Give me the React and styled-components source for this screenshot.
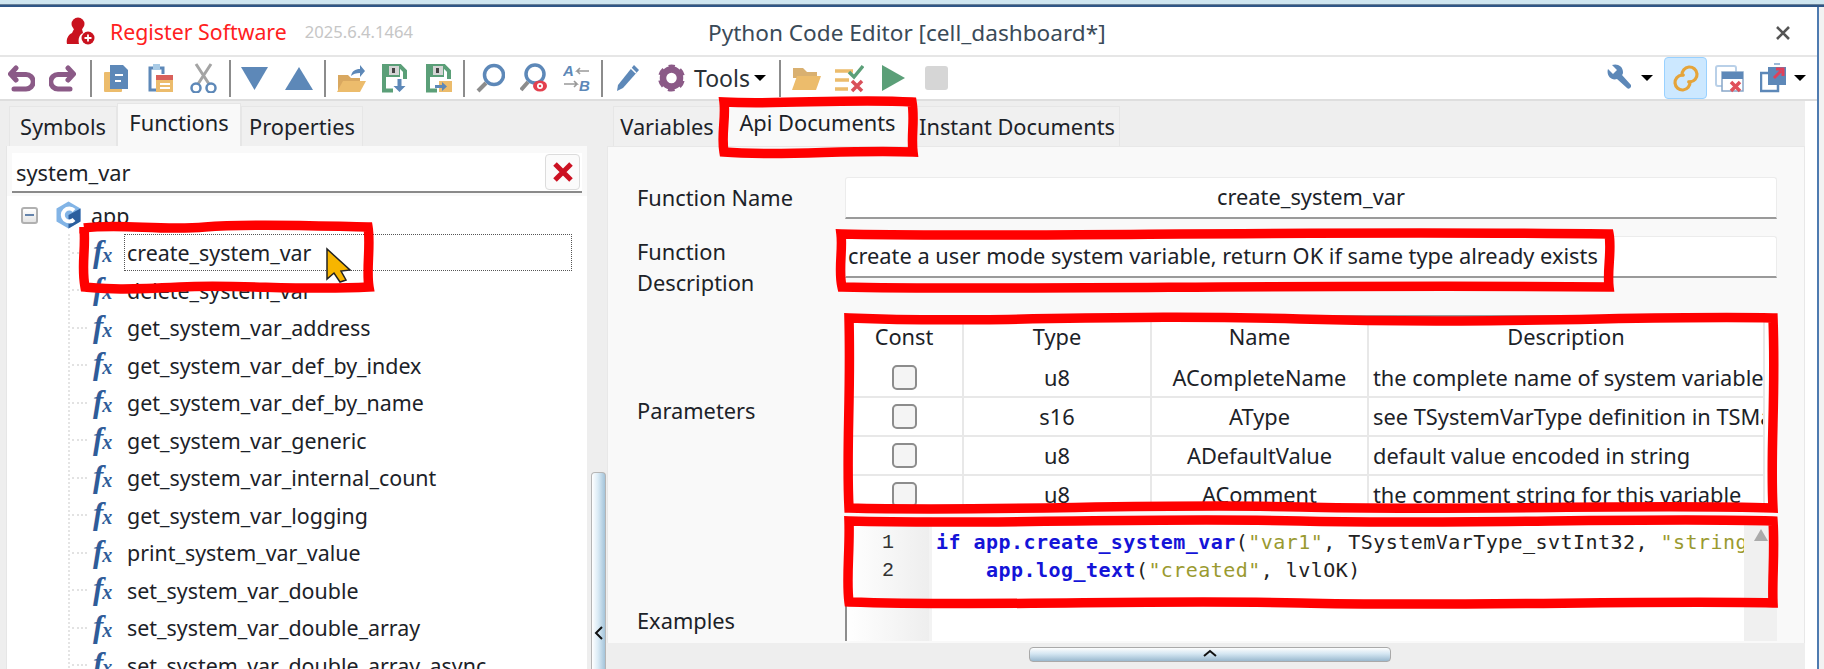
import React from "react";
import styled, { createGlobalStyle } from "styled-components";

const Global = createGlobalStyle`
  html, body { margin: 0; padding: 0; background: #fff; overflow: hidden; }
  * { box-sizing: border-box; }
  body { font-family: "Noto Sans", "Open Sans", sans-serif; color: #1c2228; }
`;

const Page = styled.div`
  position: relative;
  width: 1824px;
  height: 669px;
  overflow: hidden;
  background: #f2f2f2;
`;
const TopStrip = styled.div`
  height: 7px;
  background: linear-gradient(#cfe6f0 0 4px, #6a8299 4px 5px, #2f5686 5px);
`;
const Shell = styled.div`
  width: 1819px;
  height: 662px;
  background: #fff;
  border-right: 2px solid #4f7bb0;
  display: flex;
  flex-direction: column;
`;
const TitleBar = styled.header`
  height: 50px;
  flex: none;
  display: flex;
  align-items: center;
  padding-left: 66px;
  position: relative;
  border-bottom: 2px solid #e6e6e6;
`;
const RegisterText = styled.span`
  margin-left: 15px;
  color: #ff2020;
  font-size: 21.3px;
`;
const VersionText = styled.span`
  margin-left: 18px;
  margin-top: 0;
  color: #c6c6c6;
  font-size: 16.6px;
`;
const WindowTitle = styled.span`
  position: absolute;
  left: 708px;
  top: 9px;
  font-size: 22.6px;
  line-height: 34px;
  color: #3a4a58;
  white-space: nowrap;
`;
const CloseGlyph = styled.svg`
  position: absolute;
  right: 26px;
  top: 18px;
`;
const Toolbar = styled.div`
  height: 44px;
  flex: none;
  display: flex;
  align-items: center;
  padding-left: 8px;
  border-bottom: 2px solid #dedede;
`;
const Tool = styled.div`
  flex: none;
  margin-left: ${(p) => p.$ml || 0}px;
  display: flex;
  align-items: center;
  justify-content: center;
`;
const Sep = styled.div`
  flex: none;
  width: 2px;
  height: 37px;
  background: #8c8c8c;
  margin-left: ${(p) => p.$ml}px;
`;
const ToolsLabel = styled.span`
  margin-left: ${(p) => p.$ml}px;
  font-size: 23px;
  color: #2a2f35;
`;
const Caret = styled.span`
  flex: none;
  margin-left: ${(p) => p.$ml}px;
  width: 0;
  height: 0;
  border-left: 6px solid transparent;
  border-right: 6px solid transparent;
  border-top: 6px solid #000;
`;
const Spacer = styled.div`
  flex: 1;
`;
const ActiveTool = styled.div`
  flex: none;
  width: 43px;
  height: 42px;
  margin-left: 11px;
  border: 1px solid #99d1ff;
  border-radius: 4px;
  background: #cce8ff;
  display: flex;
  align-items: center;
  justify-content: center;
`;
const Main = styled.main`
  flex: 1;
  min-height: 0;
  display: flex;
  background: #eeeeee;
  padding-right: 12px;
  background-clip: content-box;
`;
const LeftColumn = styled.section`
  width: 587px;
  flex: none;
  padding-left: 6px;
  display: flex;
  flex-direction: column;
`;
const Tabs = styled.div`
  height: 45px;
  flex: none;
  display: flex;
  align-items: flex-end;
  padding-left: ${(p) => p.$pl}px;
`;
const Tab = styled.div`
  width: ${(p) => p.$w}px;
  height: ${(p) => (p.$active ? 43 : 40)}px;
  flex: none;
  display: flex;
  justify-content: center;
  align-items: center;
  font-size: 21.8px;
  white-space: nowrap;
  padding-bottom: ${(p) => (p.$active ? 5 : 0)}px;
  background: ${(p) => (p.$active ? "#f9f9f9" : "#f0f0f0")};
  border: 1px solid #e6e6e6;
  border-bottom: none;
`;
const LeftPanel = styled.div`
  flex: 1;
  min-height: 0;
  background: #f9f9f9;
  border-left: 1px solid #e6e6e6;
  display: flex;
  flex-direction: column;
`;
const SearchBar = styled.div`
  margin: 7px 5px 3px 5px;
  height: 40px;
  flex: none;
  background: #fff;
  border-bottom: 2px solid #8a8a8a;
  display: flex;
  align-items: center;
  justify-content: space-between;
  padding: 0 2px 0 4px;
  font-size: 21.8px;
`;
const ClearButton = styled.div`
  width: 35px;
  height: 36px;
  border: 1px solid #dcdcdc;
  border-radius: 4px;
  background: #fbfbfb;
  display: flex;
  align-items: center;
  justify-content: center;
`;
const Tree = styled.div`
  flex: 1;
  min-height: 0;
  background: #fff;
  overflow: hidden;
  position: relative;
`;
const RootRow = styled.div`
  height: 38px;
  display: flex;
  align-items: center;
  padding-left: 14px;
  font-size: 21.4px;
`;
const Expander = styled.div`
  width: 17px;
  height: 17px;
  border: 2px solid #b0b0b0;
  border-radius: 3px;
  background: linear-gradient(#fff, #e4e4e4);
  display: flex;
  align-items: center;
  justify-content: center;
  &::after {
    content: "";
    width: 9px;
    height: 2px;
    background: #6584ac;
  }
`;
const RootIcon = styled.svg`
  margin-left: 17px;
`;
const RootLabel = styled.span`
  margin-left: 9px;
`;
const Children = styled.div`
  margin-left: 61px;
  border-left: 2px dotted #e4e4e4;
`;
const Row = styled.div`
  height: 37.5px;
  display: flex;
  align-items: center;
  padding-left: 2px;
  margin-right: 15px;
  &::before {
    content: "";
    width: 15px;
    margin-right: 6px;
    flex: none;
    border-top: 2px dotted #e2e2e2;
  }
`;
const FxIcon = styled.span`
  flex: none;
  width: 31px;
  height: 32px;
  font-family: "Liberation Serif", serif;
  font-style: italic;
  font-weight: bold;
  color: #2f5c99;
  font-size: 31px;
  line-height: 30px;
  white-space: nowrap;
  letter-spacing: -1px;
  & > i {
    font-size: 20px;
  }
`;
const RowLabel = styled.div`
  flex: 1;
  height: 37px;
  line-height: 35px;
  padding-left: 2px;
  font-size: 21.4px;
  white-space: nowrap;
  border: 1.5px dotted ${(p) => (p.$focus ? "#555" : "transparent")};
`;
const VSplit = styled.div`
  width: 20px;
  flex: none;
  background: #eeeeee;
  display: flex;
  flex-direction: column;
  justify-content: flex-end;
  align-items: flex-end;
  padding-right: 1px;
`;
const VHandle = styled.div`
  position: relative;
  width: 15px;
  height: 197px;
  border: 1px solid #b5b5b5;
  border-bottom: none;
  border-radius: 4px 4px 0 0;
  background: linear-gradient(90deg, #fff 0%, #dcecf6 45%, #a4c4da 100%);
`;
const VCaret = styled.svg`
  position: absolute;
  left: 2px;
  top: 152px;
`;
const RightColumn = styled.section`
  flex: 1;
  min-width: 0;
  display: flex;
  flex-direction: column;
`;
const DocPanel = styled.div`
  height: 497px;
  flex: none;
  background: #f9f9f9;
  border: 1px solid #e8e8e8;
  border-bottom: none;
  padding: 30px 28px 0 0;
  display: flex;
  flex-direction: column;
`;
const FormRow = styled.div`
  display: grid;
  grid-template-columns: 237px 932px;
  margin-bottom: ${(p) => p.$mb}px;
`;
const Label = styled.div`
  padding-left: 29px;
  padding-bottom: ${(p) => p.$pb ?? 2}px;
  font-size: 21.8px;
  line-height: 31px;
  white-space: pre-line;
  align-self: ${(p) => p.$align || "center"};
`;
const Field = styled.div`
  height: 42px;
  background: #fff;
  border: 1px solid #ececec;
  border-bottom: 2px solid #9a9a9a;
  border-radius: 3px 3px 0 0;
  padding: 0 2px 2px;
  display: flex;
  align-items: center;
  justify-content: ${(p) => (p.$center ? "center" : "flex-start")};
  font-size: 21.8px;
  white-space: nowrap;
  overflow: hidden;
`;
const Table = styled.div`
  height: 193px;
  background: #fff;
  border-top: 2px solid #9a9a9a;
  border-left: 1px solid #ddd;
  overflow: hidden;
  display: grid;
  grid-template-columns: 118px 188px 217px 396px;
  grid-template-rows: 42px repeat(4, 39px);
`;
const Head = styled.div`
  display: flex;
  align-items: center;
  justify-content: center;
  font-size: 21.8px;
  border-right: 2px solid #e8e8e8;
  padding-bottom: 4px;
`;
const Cell = styled.div`
  display: flex;
  align-items: center;
  justify-content: ${(p) => (p.$left ? "flex-start" : "center")};
  padding-left: ${(p) => (p.$left ? 4 : 0)}px;
  font-size: 21.8px;
  border-right: 2px solid #e8e8e8;
  border-bottom: 2px solid #e8e8e8;
  white-space: nowrap;
  overflow: hidden;
`;
const Check = styled.div`
  width: 25px;
  height: 25px;
  border: 2px solid #8c8c8c;
  border-radius: 5px;
  background: #f4f4f4;
`;
const Code = styled.div`
  height: 124px;
  display: grid;
  grid-template-columns: 85px 1fr 33px;
  background: #fff;
  border-left: 2px solid #8e8e8e;
  overflow: hidden;
`;
const Gutter = styled.div`
  background: linear-gradient(90deg, #fff, #eeeeee);
  border-right: 3px solid #f3f3f3;
  padding-top: 12px;
  text-align: center;
  font-family: "Liberation Mono", monospace;
  font-size: 20px;
  line-height: 28px;
  color: #333;
`;
const CodeText = styled.pre`
  margin: 0;
  padding: 11px 0 0 4px;
  font-family: "DejaVu Sans Mono", monospace;
  font-size: 20px;
  letter-spacing: 0.45px;
  line-height: 28px;
  overflow: hidden;
  color: #222;
`;
const Kw = styled.span`
  color: #1414d8;
  font-weight: bold;
`;
const Str = styled.span`
  color: #9a9a30;
`;
const CodeScroll = styled.div`
  background: #f0f0f0;
  display: flex;
  justify-content: center;
  padding-top: 12px;
  &::before {
    content: "";
    width: 0;
    height: 0;
    border-left: 7px solid transparent;
    border-right: 7px solid transparent;
    border-bottom: 12px solid #aaa;
  }
`;
const HSplit = styled.div`
  height: 20px;
  flex: none;
  background: #eeeeee;
  display: flex;
  justify-content: center;
  padding-top: 4px;
  padding-left: 8px;
`;
const HHandle = styled.div`
  width: 362px;
  height: 15px;
  border: 1px solid #a9a9a9;
  border-radius: 4px;
  background: linear-gradient(#fdfdfd 0%, #d4e6f2 45%, #9ab9cf 100%);
  display: flex;
  justify-content: center;
  align-items: flex-start;
`;
const Overlay = styled.svg`
  position: absolute;
  left: 0;
  top: 0;
  pointer-events: none;
`;

const P = "#8b5a87";
const B = "#5d88b8";
const O = "#ecbc6c";
const G = "#5b9f78";

const Ic = ({ w = 28, h = 30, children }) => (
  <svg width={w} height={h} viewBox={`0 0 ${w} ${h}`}>{children}</svg>
);

const Undo = () => (
  <Ic w={27}><path d="M8 5 2.500 11 8 17M4 11.500H18a7 7 0 0 1 0 14.500H6" fill="none" stroke={P} strokeWidth="5" strokeLinecap="round" strokeLinejoin="round" /></Ic>
);
const Redo = () => (
  <Ic w={27}><path d="M19 5l5.500 6L19 17M23 11.500H9a7 7 0 0 0 0 14.500h12" fill="none" stroke={P} strokeWidth="5" strokeLinecap="round" strokeLinejoin="round" /></Ic>
);
const Copy = () => (
  <Ic w={26}>
    <rect x="1" y="9" width="18" height="20" rx="1" fill={O} />
    <path d="M7 2h13l5 5v19H7z" fill={B} />
    <path d="M12 12h8M12 18h6" stroke="#fff" strokeWidth="2.200" />
  </Ic>
);
const Paste = () => (
  <Ic w={27}>
    <path d="M9 27H3V5h13v6" fill="none" stroke={B} strokeWidth="3" />
    <rect x="6" y="1" width="7" height="6" fill="#a9cbe6" />
    <rect x="9" y="12" width="17" height="17" fill={O} />
    <rect x="9" y="12" width="17" height="5" fill="#d9605a" />
    <path d="M13 21h10M13 25h10" stroke="#fff" strokeWidth="2" />
  </Ic>
);
const Cut = () => (
  <Ic w={27}>
    <path d="M21 1 8 21M6 1l13 20" stroke="#a4a4a4" strokeWidth="3" />
    <circle cx="6" cy="25" r="4.500" fill="none" stroke={B} strokeWidth="2.500" />
    <circle cx="21" cy="25" r="4.500" fill="none" stroke={B} strokeWidth="2.500" />
  </Ic>
);
const TriDown = () => <Ic w={27}><path d="M0 4h27L13.500 27z" fill={B} /></Ic>;
const TriUp = () => <Ic w={28}><path d="M0 27h28L14 4z" fill={B} /></Ic>;
const OpenFolder = () => (
  <Ic w={30}>
    <path d="M2 12h10l3 3h9v4H8l-6 10z" fill="#d9a860" />
    <path d="M7 18h23l-6 11H1z" fill={O} />
    <path d="M15 13c1-5 4-7 9-7V2l5 6-5 6v-4c-4 0-7 1-9 3z" fill={B} />
  </Ic>
);
const Disk = ({ accent }) => (
  <Ic w={27}>
    <path d="M12 27.500H3V3h16l5 5v8" fill="#fff" stroke={G} strokeWidth="4" />
    <rect x="5" y="2" width="14" height="12" fill={G} />
    <rect x="8" y="3" width="10" height="9" fill="#d4d4d4" />
    <rect x="11" y="5" width="3" height="5" fill="#444" />
    {accent === "down" ? (
      <path d="M16.500 16h4v7h4l-6 6-6-6h4z" fill={B} />
    ) : (
      <g>
        <rect x="14" y="18" width="13" height="11" fill={O} />
        <path d="M10 22h7v-3l5 4.500-5 4.500v-3h-7z" fill={B} />
      </g>
    )}
  </Ic>
);
const Search = () => (
  <Ic w={29}>
    <circle cx="18" cy="12" r="9.500" fill="none" stroke={B} strokeWidth="3.500" />
    <path d="M10 20 2 28" stroke="#8c8c8c" strokeWidth="4" />
  </Ic>
);
const FindRed = () => (
  <Ic w={28}>
    <circle cx="15" cy="11" r="9" fill="none" stroke={B} strokeWidth="3.500" />
    <path d="M8 19 1 27" stroke="#8c8c8c" strokeWidth="4" />
    <ellipse cx="20" cy="23" rx="7" ry="5.500" fill="#e3404e" />
    <circle cx="20" cy="23" r="3" fill="#fff" />
    <circle cx="20" cy="23" r="1.300" fill="#e3404e" />
  </Ic>
);
const Replace = () => (
  <Ic w={27}>
    <text x="0" y="13" fontFamily="Liberation Sans, sans-serif" fontSize="15" fontWeight="bold" fontStyle="italic" fill={B}>A</text>
    <text x="16" y="28" fontFamily="Liberation Sans, sans-serif" fontSize="15" fontWeight="bold" fontStyle="italic" fill={B}>B</text>
    <path d="M26 8H14l3-3M14 8l3 3" fill="none" stroke="#999" strokeWidth="1.600" />
    <path d="M1 21h13l-3-3M14 21l-3 3" fill="none" stroke="#999" strokeWidth="1.600" />
  </Ic>
);
const Pencil = () => (
  <Ic w={24}>
    <path d="M18 2l5 5L7 25l-6 3 1-6z" fill={B} />
    <path d="M15 5l5 5" stroke="#fff" strokeWidth="1.500" />
  </Ic>
);
const Gear = () => (
  <Ic w={27}>
    <circle cx="13.500" cy="15" r="8.500" fill="none" stroke={P} strokeWidth="6.500" />
    <circle cx="13.500" cy="15" r="11.500" fill="none" stroke={P} strokeWidth="4" strokeDasharray="6.500 5.540" strokeDashoffset="3.250" transform="rotate(-90 13.500 15)" />
  </Ic>
);
const Folder = () => (
  <Ic w={30}>
    <path d="M2 5h10l4 4h10v6H2z" fill="#d9b070" />
    <path d="M6 13h24l-5 14H1z" fill={O} />
  </Ic>
);
const Todo = () => (
  <Ic w={30}>
    <path d="M1 8h18M1 17h14M1 26h13" stroke={O} strokeWidth="3.500" />
    <path d="M15 9l5 5 9-11" fill="none" stroke={G} strokeWidth="3.500" />
    <path d="M18 18l10 10M28 18 18 28" stroke="#d9505a" strokeWidth="3.500" />
  </Ic>
);
const Play = () => <Ic w={23}><path d="M0 2l23 13L0 28z" fill={G} /></Ic>;
const Stop = () => <Ic w={23}><rect x="0" y="3" width="23" height="24" rx="3" fill="#d6d6d6" /></Ic>;
const Wrench = () => (
  <Ic w={24}>
    <path d="M1 6l5 5 4-4-5-5c5-2 11 1 11 7 0 1 0 2-1 3l9 10c1 2-2 5-4 3L10 16c-6 2-11-4-9-10z" fill={B} />
  </Ic>
);
const LinkRings = () => (
  <Ic w={26}>
    <g fill="none" stroke="#e5a43a" strokeWidth="3.200" strokeLinecap="round" strokeDasharray="36.600 10.500">
      <circle cx="16.500" cy="11.500" r="7.500" transform="rotate(175 16.500 11.500)" />
      <circle cx="9.500" cy="19.500" r="7.500" transform="rotate(-5 9.500 19.500)" />
    </g>
  </Ic>
);
const WinClose = () => (
  <Ic w={29}>
    <rect x="1" y="3" width="20" height="20" rx="2" fill="#fff" stroke="#b9d0e8" strokeWidth="2" />
    <rect x="7" y="9" width="21" height="19" fill="#fff" stroke="#88a6c8" strokeWidth="1.500" />
    <rect x="7" y="9" width="21" height="7" fill={B} />
    <path d="M16 19l9 9M25 19l-9 9" stroke="#e0505a" strokeWidth="3.500" />
  </Ic>
);
const Export = () => (
  <Ic w={27}>
    <rect x="1" y="10" width="17" height="18" fill="#fff" stroke={B} strokeWidth="2.500" />
    <rect x="8" y="4" width="18" height="18" fill={B} />
    <path d="M14 15l7-7M16 6h7v7" fill="none" stroke="#e0405a" strokeWidth="3" />
    <path d="M14 1h6" stroke="#9cb9d8" strokeWidth="2" />
  </Ic>
);

const names = [
  "create_system_var",
  "delete_system_var",
  "get_system_var_address",
  "get_system_var_def_by_index",
  "get_system_var_def_by_name",
  "get_system_var_generic",
  "get_system_var_internal_count",
  "get_system_var_logging",
  "print_system_var_value",
  "set_system_var_double",
  "set_system_var_double_array",
  "set_system_var_double_array_async",
];
const params = [
  ["u8", "ACompleteName", "the complete name of system variable"],
  ["s16", "AType", "see TSystemVarType definition in TSMaster"],
  ["u8", "ADefaultValue", "default value encoded in string"],
  ["u8", "AComment", "the comment string for this variable"],
];

export default function App() {
  return (
    <Page>
      <Global />
      <TopStrip />
      <Shell>
        <TitleBar>
          <svg width="29" height="30" viewBox="0 0 29 30">
            <circle cx="12" cy="8" r="6.500" fill="#c9121f" />
            <path d="M8 13h8l1 4c-4 2-5 6-4 11H1c-1-5 1-9 5-11z" fill="#c9121f" />
            <circle cx="22" cy="22" r="6.500" fill="#c9121f" />
            <path d="M22 18.500v7M18.500 22h7" stroke="#fff" strokeWidth="1.800" />
          </svg>
          <RegisterText>Register Software</RegisterText>
          <VersionText>2025.6.4.1464</VersionText>
          <WindowTitle>Python Code Editor [cell_dashboard*]</WindowTitle>
          <CloseGlyph width="16" height="16" viewBox="0 0 16 16">
            <path d="M2 2l12 12M14 2 2 14" stroke="#555" strokeWidth="2.600" />
          </CloseGlyph>
        </TitleBar>
        <Toolbar>
          <Tool><Undo /></Tool>
          <Tool $ml={14}><Redo /></Tool>
          <Sep $ml={14} />
          <Tool $ml={11}><Copy /></Tool>
          <Tool $ml={18}><Paste /></Tool>
          <Tool $ml={16}><Cut /></Tool>
          <Sep $ml={12} />
          <Tool $ml={10}><TriDown /></Tool>
          <Tool $ml={17}><TriUp /></Tool>
          <Sep $ml={11} />
          <Tool $ml={10}><OpenFolder /></Tool>
          <Tool $ml={15}><Disk accent="down" /></Tool>
          <Tool $ml={17}><Disk accent="as" /></Tool>
          <Sep $ml={11} />
          <Tool $ml={11}><Search /></Tool>
          <Tool $ml={15}><FindRed /></Tool>
          <Tool $ml={15}><Replace /></Tool>
          <Sep $ml={11} />
          <Tool $ml={13}><Pencil /></Tool>
          <Tool $ml={18}><Gear /></Tool>
          <ToolsLabel $ml={9}>Tools</ToolsLabel>
          <Caret $ml={4} />
          <Sep $ml={13} />
          <Tool $ml={10}><Folder /></Tool>
          <Tool $ml={13}><Todo /></Tool>
          <Tool $ml={18}><Play /></Tool>
          <Tool $ml={20}><Stop /></Tool>
          <Spacer />
          <Tool><Wrench /></Tool>
          <Caret $ml={10} />
          <ActiveTool><LinkRings /></ActiveTool>
          <Tool $ml={8}><WinClose /></Tool>
          <Tool $ml={16}><Export /></Tool>
          <Caret $ml={7} />
          <Tool $ml={11} />
        </Toolbar>
        <Main>
          <LeftColumn>
            <Tabs $pl={3}>
              <Tab $w={108}>Symbols</Tab>
              <Tab $w={124} $active>Functions</Tab>
              <Tab $w={122}>Properties</Tab>
            </Tabs>
            <LeftPanel>
              <SearchBar>
                system_var
                <ClearButton>
                  <svg width="22" height="22" viewBox="0 0 22 22">
                    <path d="M3 3l16 16M19 3 3 19" stroke="#cc1122" strokeWidth="5" />
                  </svg>
                </ClearButton>
              </SearchBar>
              <Tree>
                <RootRow>
                  <Expander />
                  <RootIcon width="27" height="30" viewBox="0 0 27 30">
                    <path d="M13.500 1.500 25.500 8.500v13L13.500 28.500 1.500 21.500v-13z" fill="#82b4e6" />
                    <path d="M13.500 15 25.500 8.500v13L13.500 28.500z" fill="#2c5f9e" />
                    <path d="M19 10.500a6.500 6.500 0 1 0 0 9" fill="none" stroke="#fff" strokeWidth="4" />
                  </RootIcon>
                  <RootLabel>app</RootLabel>
                </RootRow>
                <Children>
                  {names.map((n, i) => (
                    <Row key={n}>
                      <FxIcon>f<i>x</i></FxIcon>
                      <RowLabel $focus={i === 0}>{n}</RowLabel>
                    </Row>
                  ))}
                </Children>
              </Tree>
            </LeftPanel>
          </LeftColumn>
          <VSplit>
            <VHandle>
              <VCaret width="10" height="16" viewBox="0 0 10 16">
                <path d="M8 2 2 8l6 6" fill="none" stroke="#111" strokeWidth="2" />
              </VCaret>
            </VHandle>
          </VSplit>
          <RightColumn>
            <Tabs $pl={6}>
              <Tab $w={108}>Variables</Tab>
              <Tab $w={193} $active>Api Documents</Tab>
              <Tab $w={206}>Instant Documents</Tab>
            </Tabs>
            <DocPanel>
              <FormRow $mb={17}>
                <Label>Function Name</Label>
                <Field $center>create_system_var</Field>
              </FormRow>
              <FormRow $mb={17}>
                <Label $align="start" $pb={0}>{"Function\nDescription"}</Label>
                <Field>create a user mode system variable, return OK if same type already exists</Field>
              </FormRow>
              <FormRow $mb={9}>
                <Label>Parameters</Label>
                <Table>
                  <Head>Const</Head>
                  <Head>Type</Head>
                  <Head>Name</Head>
                  <Head>Description</Head>
                  {params.map(([t, n, d]) => (
                    <React.Fragment key={n}>
                      <Cell><Check /></Cell>
                      <Cell>{t}</Cell>
                      <Cell>{n}</Cell>
                      <Cell $left>{d}</Cell>
                    </React.Fragment>
                  ))}
                </Table>
              </FormRow>
              <FormRow $mb={0}>
                <Label $align="end" $pb={5}>Examples</Label>
                <Code>
                  <Gutter>1<br />2</Gutter>
                  <CodeText>
                    <Kw>if app.create_system_var</Kw>(<Str>"var1"</Str>, TSystemVarType_svtInt32, <Str>"string"</Str>{"\n    "}
                    <Kw>app.log_text</Kw>(<Str>"created"</Str>, lvlOK)
                  </CodeText>
                  <CodeScroll />
                </Code>
              </FormRow>
            </DocPanel>
            <HSplit>
              <HHandle>
                <svg width="18" height="10" viewBox="0 0 18 10">
                  <path d="M3 8l6-5 6 5" fill="none" stroke="#111" strokeWidth="2" />
                </svg>
              </HHandle>
            </HSplit>
          </RightColumn>
        </Main>
      </Shell>
      <Overlay width="1824" height="669" viewBox="0 0 1824 669" fill="none" stroke="#ff0000" strokeWidth="9.500">
        <path d="M84 228C120 223 160 231 205 227S320 226 368 227C371 245 366 270 369 287C300 291 240 284 180 287S110 289 85 287C81 265 86 250 84 227Z" />
        <path d="M724 102C780 105 850 98 912 102C915 120 911 135 913 152C850 149 780 157 724 152C721 135 726 118 724 102Z" />
        <path d="M841 234C1000 238 1300 230 1609 234C1612 250 1607 270 1609 287C1300 284 1000 291 842 287C838 270 843 250 841 234Z" />
        <path d="M849 318C1000 324 1100 313 1300 319S1650 315 1773 318C1776 400 1770 450 1773 508C1650 504 1450 511 1300 507S1000 512 849 508C846 450 851 400 849 318Z" />
        <path d="M849 521C1000 525 1150 517 1300 521S1650 517 1773 521C1775 550 1772 580 1773 603C1650 600 1450 607 1300 603S1000 607 849 602C846 580 850 550 849 521Z" />
      </Overlay>
      <Overlay width="1824" height="669" viewBox="0 0 1824 669">
        <path d="M327 249v30l7-6 6 9 6-2-5-9 9-1z" fill="#f7b500" stroke="#222" strokeWidth="1.500" />
      </Overlay>
    </Page>
  );
}
